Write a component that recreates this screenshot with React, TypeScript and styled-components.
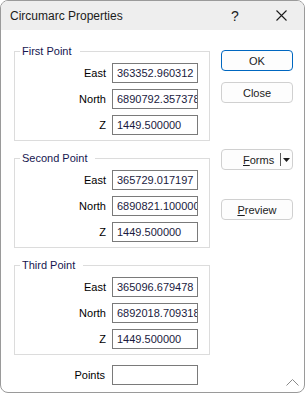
import React from 'react';
import styled, {createGlobalStyle} from 'styled-components';

const GlobalStyle = createGlobalStyle`
  html, body {
    margin: 0;
    padding: 0;
    background: #ffffff;
  }
  body {
    font-family: "Liberation Sans", Arial, sans-serif;
    font-size: 11px;
    color: #000000;
  }
`;

type FieldProps = {
  label: string;
  value: string;
};

const Field: React.FC<FieldProps> = (props) => {
  return (
    <FieldRow>
      <FieldLabel>{props.label}</FieldLabel>
      <Input readOnly value={props.value}/>
    </FieldRow>
  );
};

type GroupProps = {
  title: string;
  east: string;
  north: string;
  z: string;
};

const PointGroup: React.FC<GroupProps> = (props) => {
  return (
    <Group>
      <Legend>{props.title}</Legend>
      <Field label='East' value={props.east}/>
      <Field label='North' value={props.north}/>
      <Field label='Z' value={props.z}/>
    </Group>
  );
};

const CloseIcon = () => (
  <svg width='11' height='11' viewBox='0 0 11 11'>
    <path d='M0.5 0.5 L10.5 10.5 M10.5 0.5 L0.5 10.5' stroke='#1b1b1b' strokeWidth='1.1' fill='none'/>
  </svg>
);

export default function App() {
  return (
    <>
      <GlobalStyle/>
      <Window>
        <TitleBar>
          <Title>Circumarc Properties</Title>
          <TitleButton>?</TitleButton>
          <TitleButton><CloseIcon/></TitleButton>
        </TitleBar>
        <Body>
          <LeftColumn>
            <PointGroup title='First Point' east='363352.960312' north='6890792.357378' z='1449.500000'/>
            <PointGroup title='Second Point' east='365729.017197' north='6890821.100000' z='1449.500000'/>
            <PointGroup title='Third Point' east='365096.679478' north='6892018.709318' z='1449.500000'/>
            <PointsRow>
              <FieldLabel>Points</FieldLabel>
              <Input readOnly value=''/>
            </PointsRow>
          </LeftColumn>
          <RightColumn>
            <Button $primary $top={20}>OK</Button>
            <Button $top={11}>Close</Button>
            <SplitButton $top={46}>
              <SplitText><u>F</u>orms</SplitText>
              <SplitDivider/>
              <SplitArrow>
                <svg width='7' height='4' viewBox='0 0 7 4'>
                  <path d='M0 0 H7 L3.5 4 Z' fill='#1b1b1b'/>
                </svg>
              </SplitArrow>
            </SplitButton>
            <Button $top={29}><u>P</u>review</Button>
          </RightColumn>
        </Body>
        <Grip>
          <svg width='13' height='7' viewBox='0 0 13 7'>
            <path d='M0.5 6.5 L6.5 0.5 L12.5 6.5' stroke='#8a8a8a' strokeWidth='1' fill='none'/>
          </svg>
        </Grip>
      </Window>
    </>
  );
}

const Window = styled.div`
  position: relative;
  box-sizing: border-box;
  width: 305px;
  height: 393px;
  border: 1px solid #9a9a9a;
  border-radius: 8px;
  background: #ffffff;
  overflow: hidden;
  display: flex;
  flex-direction: column;
`;

const TitleBar = styled.div`
  height: 29px;
  background: #eeeeee;
  display: flex;
  flex-direction: row;
  align-items: center;
  padding-left: 9px;
`;

const Title = styled.div`
  flex: 1;
  font-size: 12px;
  color: #1b1b1b;
`;

const TitleButton = styled.div`
  width: 46px;
  display: flex;
  align-items: center;
  justify-content: center;
  font-size: 14px;
  color: #1b1b1b;
`;

const Body = styled.div`
  display: flex;
  flex-direction: row;
  align-items: flex-start;
  padding-left: 13px;
`;

const LeftColumn = styled.div`
  width: 196px;
  padding-top: 15px;
  display: flex;
  flex-direction: column;
  gap: 11px;
`;

const RightColumn = styled.div`
  margin-left: 11px;
  display: flex;
  flex-direction: column;
  width: 72px;
`;

const Group = styled.fieldset`
  box-sizing: border-box;
  margin: 0;
  width: 196px;
  padding: 5px 11px 5px 0;
  border: 1px solid #dcdcdc;
  display: flex;
  flex-direction: column;
  gap: 6px;
`;

const Legend = styled.legend`
  margin-left: 5px;
  padding: 0 8px 0 2px;
  font-size: 11px;
  line-height: 13px;
  color: #161650;
`;

const FieldRow = styled.div`
  display: flex;
  flex-direction: row;
  align-items: center;
  gap: 6px;
`;

const FieldLabel = styled.div`
  flex: 1;
  text-align: right;
  font-size: 11px;
  color: #000000;
`;

const Input = styled.input`
  box-sizing: border-box;
  width: 86px;
  height: 20px;
  margin: 0;
  padding: 0 0 0 4px;
  border: 1px solid #7a7a7a;
  background: #ffffff;
  font-family: "Liberation Sans", Arial, sans-serif;
  font-size: 11px;
  color: #1a1a40;
  outline: none;
`;

const PointsRow = styled.div`
  display: flex;
  flex-direction: row;
  align-items: center;
  gap: 7px;
  padding-right: 12px;
  margin-top: -1px;
`;

const Button = styled.div<{$primary?: boolean; $top: number}>`
  box-sizing: border-box;
  height: 21px;
  margin-top: ${(p) => p.$top}px;
  border: 1px solid ${(p) => (p.$primary ? '#0067c0' : '#d0d0d0')};
  border-radius: 4px;
  background: #fdfdfd;
  display: flex;
  align-items: center;
  justify-content: center;
  font-size: 11px;
  color: #1b1b1b;
`;

const SplitButton = styled(Button)`
  justify-content: flex-start;
  padding-left: 21px;
`;

const SplitText = styled.span`
  margin-right: 6px;
`;

const SplitDivider = styled.div`
  width: 1px;
  height: 13px;
  background: #5a5a5a;
`;

const SplitArrow = styled.div`
  flex: 1;
  display: flex;
  align-items: center;
  justify-content: center;
`;

const Grip = styled.div`
  position: absolute;
  right: 5px;
  bottom: 6px;
  display: flex;
`;
